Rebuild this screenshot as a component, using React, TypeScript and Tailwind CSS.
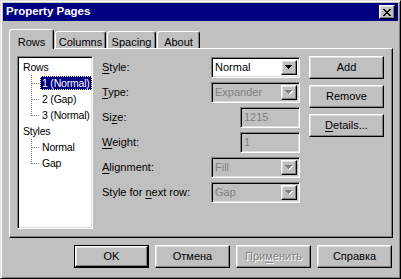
const raised =
  "border border-t-white border-l-white border-r-black border-b-black shadow-[inset_-1px_-1px_0_#808080,inset_1px_1px_0_#dfdfdf]";
const sunken =
  "border border-t-[#808080] border-l-[#808080] border-r-white border-b-white shadow-[inset_1px_1px_0_#000,inset_-1px_-1px_0_#dfdfdf]";

function Arrow({ disabled }: { disabled?: boolean }) {
  return (
    <svg width="8" height="5" viewBox="0 0 8 5" shapeRendering="crispEdges">
      {disabled && <path d="M1 1h7v1H1zM2 2h5v1H2zM3 3h3v1H3zM4 4h1v1H4z" fill="#fff" />}
      <path d="M0 0h7v1H0zM1 1h5v1H1zM2 2h3v1H2zM3 3h1v1H3z" fill={disabled ? "#808080" : "#000"} />
    </svg>
  );
}

function Combo({ value, disabled }: { value: string; disabled?: boolean }) {
  return (
    <div
      className={`${sunken} w-[89px] h-[21px] p-[2px] flex items-stretch ${
        disabled ? "bg-[#c0c0c0] text-[#808080]" : "bg-white text-black"
      }`}
    >
      <span className="flex-1 pl-[1px] leading-[15px] whitespace-nowrap">{value}</span>
      <span className={`${raised} w-[16px] bg-[#c0c0c0] flex items-center justify-center`}>
        <Arrow disabled={disabled} />
      </span>
    </div>
  );
}

function Field({ value }: { value: string }) {
  return (
    <div className={`${sunken} w-[60px] h-[21px] px-[3px] bg-[#c0c0c0] text-[#808080] leading-[19px]`}>
      {value}
    </div>
  );
}

function Button({ children, def, disabled }: { children: React.ReactNode; def?: boolean; disabled?: boolean }) {
  return (
    <div className={`w-[75px] h-[23px] ${def ? "border border-black" : ""}`}>
      <div
        className={`${raised} h-full w-full bg-[#c0c0c0] flex items-center justify-center whitespace-nowrap ${
          disabled ? "text-[#808080] [text-shadow:1px_1px_0_#fff]" : "text-black"
        }`}
      >
        {children}
      </div>
    </div>
  );
}

function TreeLine({ last }: { last?: boolean }) {
  return (
    <svg width="20" height="16" viewBox="0 0 20 16" shapeRendering="crispEdges" className="shrink-0">
      <path
        d={`M11.5 0V${last ? 9 : 16}M12 8.5H20`}
        stroke="#808080"
        strokeWidth="1"
        strokeDasharray="1 1"
        fill="none"
      />
    </svg>
  );
}

function TreeChild({ label, last, selected }: { label: string; last?: boolean; selected?: boolean }) {
  return (
    <div className="flex h-[16px] items-center whitespace-nowrap">
      <TreeLine last={last} />
      <span
        className={`px-[1px] h-[14px] leading-[12px] border ${
          selected ? "bg-[#000080] text-white border-dotted border-[#ffffa0]" : "border-transparent"
        }`}
      >
        {label}
      </span>
    </div>
  );
}

function Label({ text, u }: { text: string; u: number }) {
  return (
    <span className="whitespace-nowrap">
      {text.slice(0, u)}
      <span className="underline underline-offset-[2px]">{text[u]}</span>
      {text.slice(u + 1)}
    </span>
  );
}

export default function App() {
  const rows: { label: string; u: number; control: React.ReactNode }[] = [
    { label: "Style:", u: 0, control: <Combo value="Normal" /> },
    { label: "Type:", u: 0, control: <Combo value="Expander" disabled /> },
    { label: "Size:", u: 2, control: <Field value="1215" /> },
    { label: "Weight:", u: 0, control: <Field value="1" /> },
    { label: "Alignment:", u: 0, control: <Combo value="Fill" disabled /> },
    { label: "Style for next row:", u: 10, control: <Combo value="Gap" disabled /> },
  ];

  return (
    <div className="w-[401px] h-[279px] bg-[#c0c0c0] border border-t-[#dfdfdf] border-l-[#dfdfdf] border-r-black border-b-black shadow-[inset_1px_1px_0_#fff,inset_-1px_-1px_0_#808080] p-[2px] flex flex-col text-[11px] text-black font-['Liberation_Sans',Arial,sans-serif]">
      {/* title bar */}
      <div className="h-[18px] bg-[#000080] flex items-center pl-[3px] pr-[3px]">
        <span className="text-white font-bold text-[11.5px]">Property Pages</span>
        <div className={`${raised} ml-auto w-[16px] h-[14px] bg-[#c0c0c0] flex items-center justify-center`}>
          <svg width="8" height="7" viewBox="0 0 8 7" shapeRendering="crispEdges">
            <path
              d="M0 0h2v1H0zM6 0h2v1H6zM1 1h2v1H1zM5 1h2v1H5zM2 2h4v1H2zM3 3h2v1H3zM2 4h4v1H2zM1 5h2v1H1zM5 5h2v1H5zM0 6h2v1H0zM6 6h2v1H6z"
              fill="#000"
            />
          </svg>
        </div>
      </div>

      <div className="flex-1 pl-[6px] pr-[5px] pt-[8px] flex flex-col">
        {/* tabs */}
        <div className="h-[19px] flex items-end">
          <div className="relative z-10 w-[45px] h-[20px] mb-[-1px] bg-[#c0c0c0] border-t border-l border-t-white border-l-white border-r border-r-black shadow-[inset_-1px_0_0_#808080] rounded-t-[3px] flex items-start justify-center pt-[4px]">
            Rows
          </div>
          {[
            ["Columns", "w-[51px]"],
            ["Spacing", "w-[49px]"],
            ["About", "w-[43px]"],
          ].map(([t, w]) => (
            <div
              key={t}
              className={`${w} h-[17px] ml-[1px] first:ml-0 bg-[#c0c0c0] border-t border-l border-t-white border-l-white border-r border-r-black shadow-[inset_-1px_0_0_#808080] rounded-t-[3px] flex items-start justify-center pt-[2px]`}
            >
              {t}
            </div>
          ))}
        </div>

        {/* panel */}
        <div className="h-[190px] border border-t-white border-l-white border-r-black border-b-black shadow-[inset_-1px_-1px_0_#808080] flex items-start pl-[7px] pt-[7px]">
          <div className={`${sunken} w-[76px] h-[173px] bg-white p-[2px] overflow-hidden text-[10.5px] tracking-[-0.2px]`}>
            <div className="h-[16px] leading-[16px] pl-[3px]">Rows</div>
            <TreeChild label="1 (Normal)" selected />
            <TreeChild label="2 (Gap)" />
            <TreeChild label="3 (Normal)" last />
            <div className="h-[16px] leading-[16px] pl-[3px]">Styles</div>
            <TreeChild label="Normal" />
            <TreeChild label="Gap" last />
          </div>

          <div className="ml-[9px] w-[198px] pt-[1px] flex flex-col gap-[4px]">
            {rows.map((r) => (
              <div key={r.label} className="h-[21px] flex items-center justify-between">
                <Label text={r.label} u={r.u} />
                {r.control}
              </div>
            ))}
          </div>

          <div className="ml-[9px] flex flex-col gap-[6px]">
            <Button>Add</Button>
            <Button>Remove</Button>
            <Button>
              <Label text="Details..." u={0} />
            </Button>
          </div>
        </div>

        {/* bottom buttons */}
        <div className="mt-[7px] flex justify-end gap-[6px] pr-[1px]">
          <Button def>OK</Button>
          <Button>Отмена</Button>
          <Button disabled>
            <Label text="Применить" u={3} />
          </Button>
          <Button>Справка</Button>
        </div>
      </div>
    </div>
  );
}
